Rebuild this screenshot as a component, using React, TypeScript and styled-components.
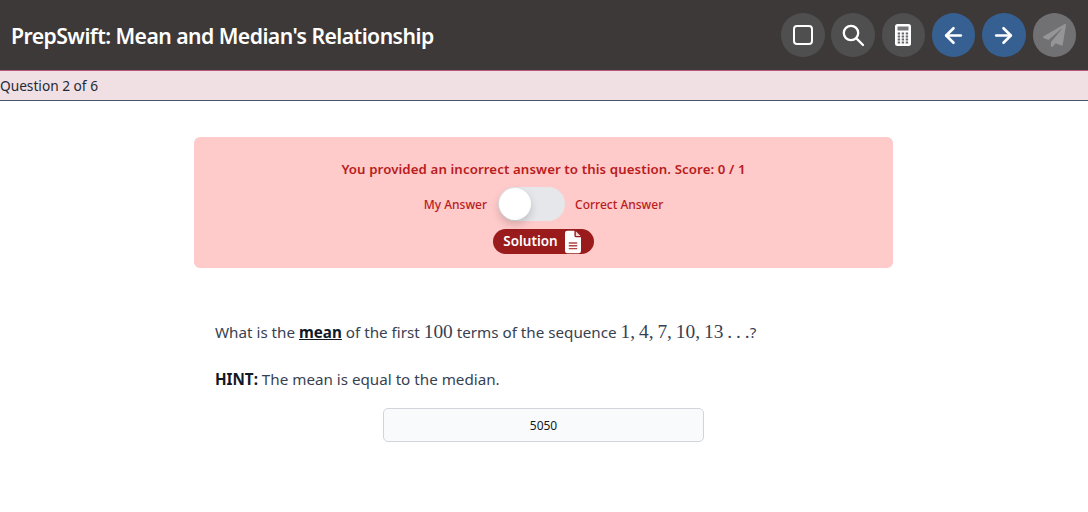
import React from "react";
import styled, { createGlobalStyle } from "styled-components";
import { ArrowLeft, ArrowRight } from "lucide-react";
import { FaPaperPlane } from "react-icons/fa";

const Global = createGlobalStyle`
  html, body { margin: 0; padding: 0; background: #fff; }
  body { font-family: "Noto Sans", "Open Sans", sans-serif; color: #374151; }
`;

const Page = styled.div`
  width: 1088px;
  height: 512px;
  overflow: hidden;
  display: flex;
  flex-direction: column;
`;

const Header = styled.header`
  height: 70px;
  background: #3d3939;
  border-bottom: 1px solid #b5577f;
  display: flex;
  align-items: center;
  justify-content: space-between;
  padding: 0 12px 0 11px;
`;

const Title = styled.h1`
  margin: 0;
  font-size: 21.2px;
  font-weight: 600;
  color: #fff;
  letter-spacing: -0.55px;
`;

const Tools = styled.div`
  display: flex;
  gap: 6.8px;
  align-items: center;
`;

const RoundButton = styled.button<{ $tone: "gray" | "blue" | "muted" }>`
  width: 43.5px;
  height: 43.5px;
  padding: 0;
  border: 0;
  border-radius: 50%;
  display: flex;
  align-items: center;
  justify-content: center;
  color: ${(p) => (p.$tone === "muted" ? "#959597" : "#fff")};
  background: ${(p) =>
    p.$tone === "blue" ? "#366092" : p.$tone === "muted" ? "#717174" : "#4f4f4f"};
`;

const ProgressBar = styled.div`
  height: 29px;
  background: #f0e0e4;
  border-bottom: 1px solid #475569;
  font-size: 13.7px;
  line-height: 29px;
  color: #1f2937;
`;

const Main = styled.main`
  width: 699px;
  margin: 36px auto 0 194px;
  display: flex;
  flex-direction: column;
`;

const Banner = styled.section`
  height: 131px;
  box-sizing: border-box;
  padding-top: 22px;
  background: #fecaca;
  border-radius: 6px;
  color: #b91c1c;
  display: flex;
  flex-direction: column;
  align-items: center;
`;

const BannerTitle = styled.div`
  font-size: 13.25px;
  line-height: 20px;
  font-weight: 600;
  letter-spacing: 0.1px;
`;

const ToggleRow = styled.div`
  margin-top: 8px;
  height: 34px;
  display: flex;
  align-items: center;
  gap: 10.5px;
  font-size: 12px;
  font-weight: 500;
`;

const Toggle = styled.div`
  position: relative;
  width: 67px;
  height: 34px;
  border-radius: 17px;
  background: #e5e7eb;
`;

const Knob = styled.span`
  position: absolute;
  left: 1px;
  top: 1px;
  width: 32px;
  height: 32px;
  border-radius: 50%;
  background: #fff;
  box-shadow: 0 4px 8px rgba(0, 0, 0, 0.18);
`;

const SolutionButton = styled.button`
  margin-top: 8px;
  height: 25px;
  width: 101px;
  padding: 0 3px 0 0;
  border: 0;
  border-radius: 13px;
  background: #991b1b;
  color: #fff;
  font-family: inherit;
  font-size: 13.5px;
  font-weight: 600;
  display: flex;
  align-items: center;
  justify-content: center;
  gap: 7px;
`;

const SolutionLabel = styled.span`
  position: relative;
  top: -1px;
`;

const Question = styled.div`
  padding: 52px 21px 0;
  font-size: 15.2px;
  line-height: 24px;
`;

const Paragraph = styled.p<{ $gap?: number }>`
  margin: ${(p) => p.$gap ?? 0}px 0 0;
`;

const Strong = styled.b`
  font-weight: 700;
  color: #111827;
`;

const Underlined = styled(Strong)`
  text-decoration: underline;
`;

const MathText = styled.span`
  font-family: "Liberation Serif", serif;
  font-size: 19.4px;
  color: #374151;
`;

const AnswerBox = styled.div`
  align-self: center;
  margin-top: 17px;
  width: 321px;
  height: 34px;
  box-sizing: border-box;
  background: #f9fafb;
  border: 1px solid #d1d5db;
  border-radius: 5px;
  font-size: 12px;
  line-height: 33px;
  text-align: center;
  color: #111827;
`;

function SquareIcon() {
  return (
    <svg width="20" height="20" viewBox="0 0 20 20" fill="none">
      <rect x="1" y="1" width="18" height="18" rx="3" stroke="currentColor" strokeWidth="2" />
    </svg>
  );
}

function SearchIcon() {
  return (
    <svg width="24" height="24" viewBox="0 0 24 24" fill="none" stroke="currentColor" strokeWidth="2.3" strokeLinecap="round">
      <circle cx="10" cy="10" r="7.2" />
      <path d="M15.4 15.4 22 22" />
    </svg>
  );
}

function CalculatorIcon() {
  return (
    <svg width="16" height="22" viewBox="0 0 16 22">
      <rect x="0" y="0" width="16" height="22" rx="2.5" fill="#fff" />
      <rect x="2.5" y="2.5" width="11" height="4" fill="#77777a" />
      {[8.5, 11.5, 14.5, 17.5].flatMap((y) =>
        [2.7, 6.7, 10.7].map((x) => (
          <rect key={`${x}-${y}`} x={x} y={y} width="2.4" height="2" fill="#66666a" />
        ))
      )}
    </svg>
  );
}

function FileIcon() {
  return (
    <svg width="16" height="24" viewBox="0 0 17 24">
      <path d="M2.5 0H10v5a2 2 0 0 0 2 2h5v14.5a2.5 2.5 0 0 1-2.5 2.5h-12A2.5 2.5 0 0 1 0 21.5v-19A2.5 2.5 0 0 1 2.5 0Z" fill="#fff" />
      <path d="M11.5 0.5 16.5 5.5h-5Z" fill="#f3d6d6" />
      <path d="M4 13h9M4 16h9M4 19h9" stroke="#b04545" strokeWidth="1.5" />
    </svg>
  );
}

export default function App() {
  return (
    <Page>
      <Global />
      <Header>
        <Title>PrepSwift: Mean and Median's Relationship</Title>
        <Tools>
          <RoundButton $tone="gray"><SquareIcon /></RoundButton>
          <RoundButton $tone="gray"><SearchIcon /></RoundButton>
          <RoundButton $tone="gray"><CalculatorIcon /></RoundButton>
          <RoundButton $tone="blue"><ArrowLeft size={25} strokeWidth={2.5} /></RoundButton>
          <RoundButton $tone="blue"><ArrowRight size={25} strokeWidth={2.5} /></RoundButton>
          <RoundButton $tone="muted"><FaPaperPlane size={23} /></RoundButton>
        </Tools>
      </Header>
      <ProgressBar>Question 2 of 6</ProgressBar>
      <Main>
        <Banner>
          <BannerTitle>You provided an incorrect answer to this question. Score: 0 / 1</BannerTitle>
          <ToggleRow>
            <span>My Answer</span>
            <Toggle><Knob /></Toggle>
            <span>Correct Answer</span>
          </ToggleRow>
          <SolutionButton><SolutionLabel>Solution</SolutionLabel><FileIcon /></SolutionButton>
        </Banner>
        <Question>
          <Paragraph>
            What is the <Underlined>mean</Underlined> of the first <MathText>100</MathText> terms of the sequence <MathText>1,{"\u2009"}4,{"\u2009"}7,{"\u2009"}10,{"\u2009"}13{"\u2009"}.{"\u2009"}.{"\u2009"}.</MathText>?
          </Paragraph>
          <Paragraph $gap={23}><Strong>HINT:</Strong> The mean is equal to the median.</Paragraph>
        </Question>
        <AnswerBox>5050</AnswerBox>
      </Main>
    </Page>
  );
}
